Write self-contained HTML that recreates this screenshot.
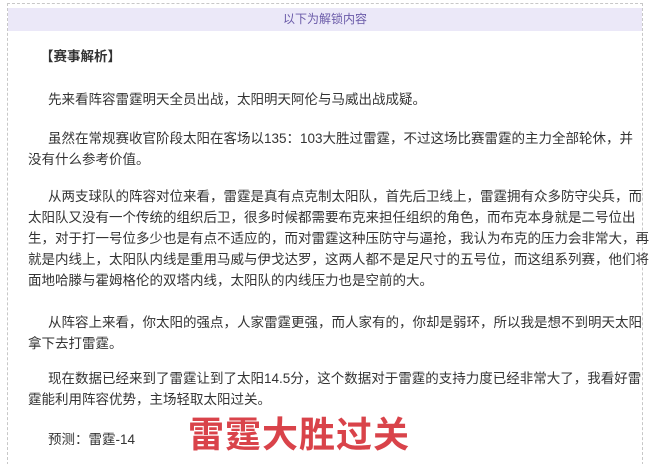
<!DOCTYPE html>
<html><head><meta charset="utf-8"><style>
html,body{margin:0;padding:0;background:#fff;width:650px;height:464px;overflow:hidden;}
body{font-family:"Liberation Sans","Microsoft YaHei","Noto Sans CJK SC",sans-serif;color:#333;position:relative;}
.box{position:absolute;left:7px;top:3px;width:634px;height:470px;border:1px dashed #c8c8c8;}
.hd{position:absolute;left:8px;top:8px;width:634px;height:23px;background:#ebe8f8;color:#6a5aa8;font-size:12px;line-height:23px;text-align:center;}
.l{position:absolute;left:28px;font-size:13.5px;line-height:22px;white-space:nowrap;}
.i{left:48px;}
.big{position:absolute;left:188px;top:413px;font-size:36px;font-weight:bold;color:#d9434a;line-height:44px;letter-spacing:1px;}
</style></head><body>
<div class="box"></div>
<div class="hd">以下为解锁内容</div>
<div class="l" style="left:40px;top:46px;font-weight:bold;">【赛事解析】</div>
<div class="l i" style="top:89px;">先来看阵容雷霆明天全员出战，太阳明天阿伦与马威出战成疑。</div>
<div class="l i" style="top:128px;">虽然在常规赛收官阶段太阳在客场以135：103大胜过雷霆，不过这场比赛雷霆的主力全部轮休，并</div>
<div class="l" style="top:149px;">没有什么参考价值。</div>
<div class="l i" style="top:186px;">从两支球队的阵容对位来看，雷霆是真有点克制太阳队，首先后卫线上，雷霆拥有众多防守尖兵，而</div>
<div class="l" style="top:207px;">太阳队又没有一个传统的组织后卫，很多时候都需要布克来担任组织的角色，而布克本身就是二号位出</div>
<div class="l" style="top:228px;">生，对于打一号位多少也是有点不适应的，而对雷霆这种压防守与逼抢，我认为布克的压力会非常大，再</div>
<div class="l" style="top:249px;">就是内线上，太阳队内线是重用马威与伊戈达罗，这两人都不是足尺寸的五号位，而这组系列赛，他们将</div>
<div class="l" style="top:270px;">面地哈滕与霍姆格伦的双塔内线，太阳队的内线压力也是空前的大。</div>
<div class="l i" style="top:312px;">从阵容上来看，你太阳的强点，人家雷霆更强，而人家有的，你却是弱环，所以我是想不到明天太阳</div>
<div class="l" style="top:333px;">拿下去打雷霆。</div>
<div class="l i" style="top:368px;">现在数据已经来到了雷霆让到了太阳14.5分，这个数据对于雷霆的支持力度已经非常大了，我看好雷</div>
<div class="l" style="top:389px;">霆能利用阵容优势，主场轻取太阳过关。</div>
<div class="l i" style="top:429px;">预测：雷霆-14</div>
<div class="big">雷霆大胜过关</div>
</body></html>
